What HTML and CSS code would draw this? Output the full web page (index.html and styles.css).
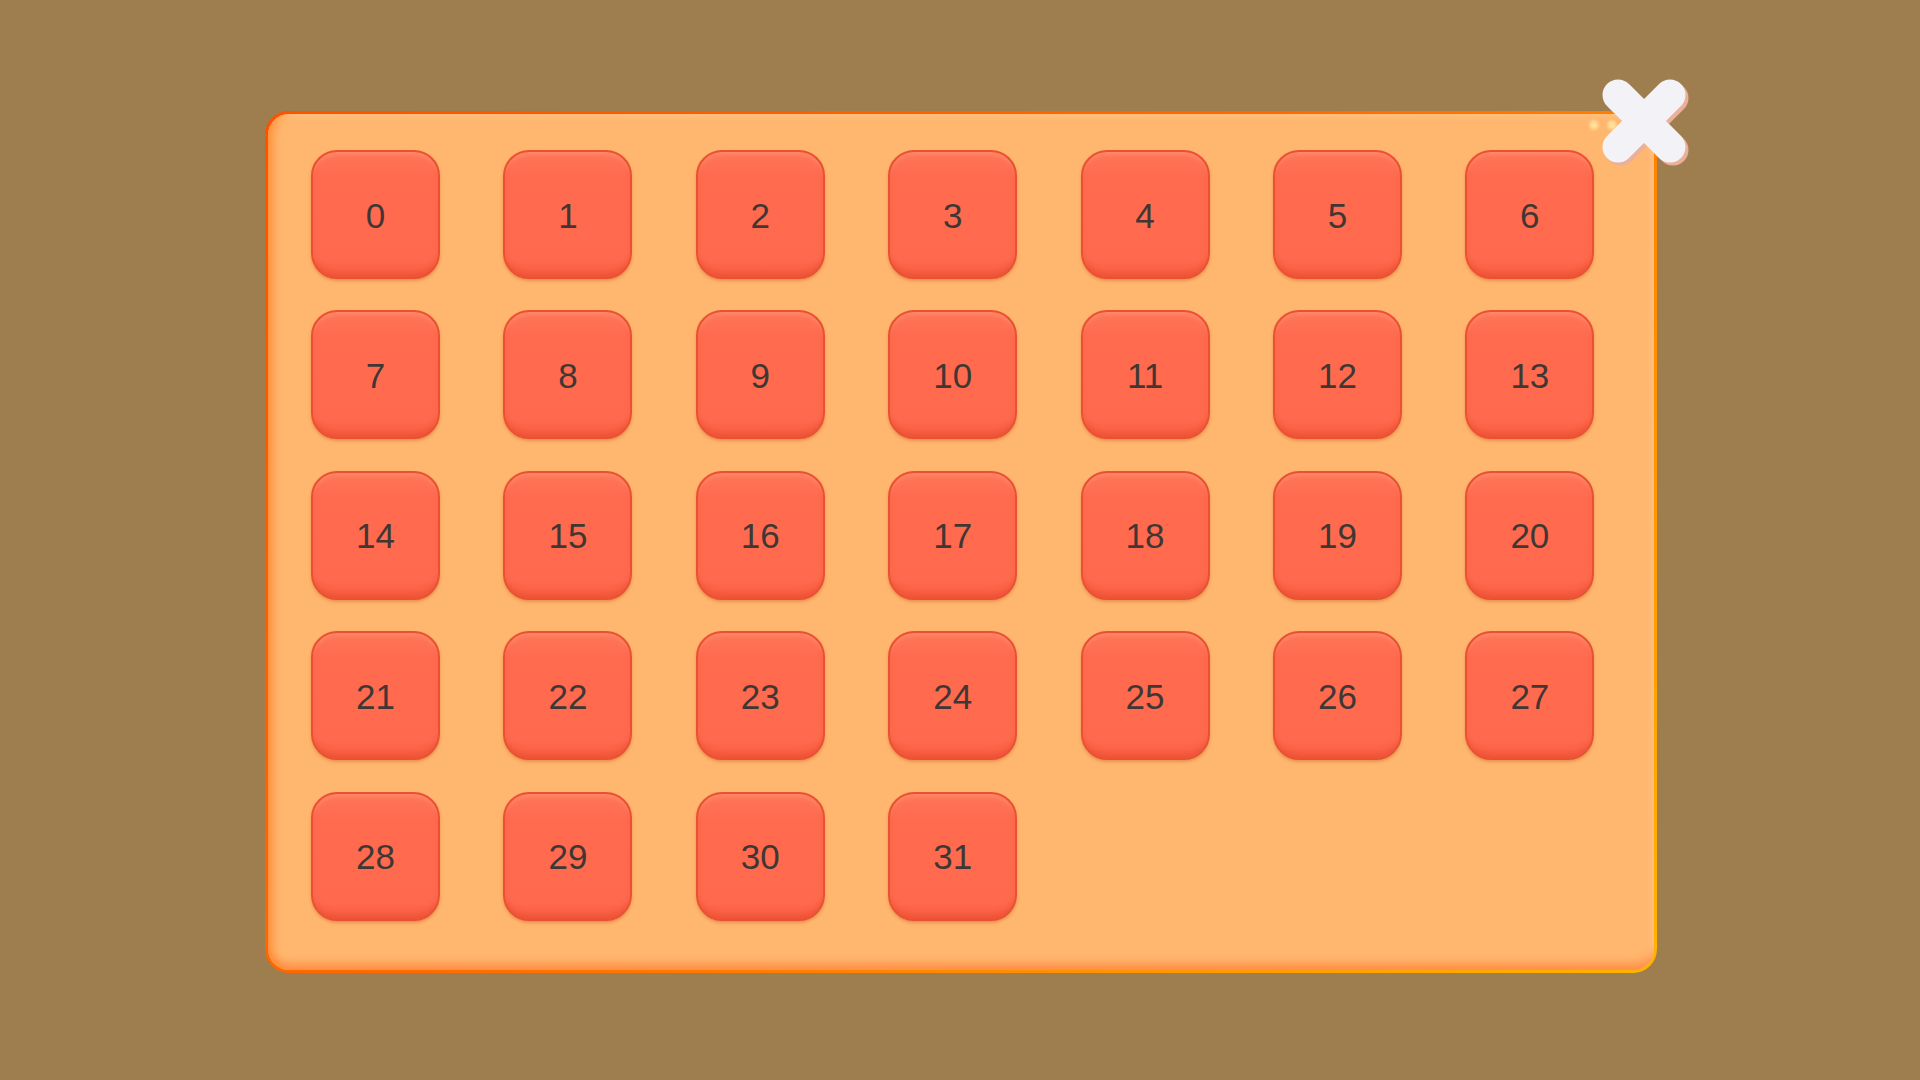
FILE: index.html
```html
<!DOCTYPE html>
<html>
<head>
<meta charset="utf-8">
<title>Levels</title>
<link rel="stylesheet" href="styles.css">
</head>
<body>
<div class="stage">
  <div class="panel">
    <div class="grid">
      <div class="cell">0</div><div class="cell">1</div><div class="cell">2</div><div class="cell">3</div><div class="cell">4</div><div class="cell">5</div><div class="cell">6</div>
      <div class="cell">7</div><div class="cell">8</div><div class="cell">9</div><div class="cell">10</div><div class="cell">11</div><div class="cell">12</div><div class="cell">13</div>
      <div class="cell">14</div><div class="cell">15</div><div class="cell">16</div><div class="cell">17</div><div class="cell">18</div><div class="cell">19</div><div class="cell">20</div>
      <div class="cell">21</div><div class="cell">22</div><div class="cell">23</div><div class="cell">24</div><div class="cell">25</div><div class="cell">26</div><div class="cell">27</div>
      <div class="cell">28</div><div class="cell">29</div><div class="cell">30</div><div class="cell">31</div>
    </div>
    <svg class="close" width="120" height="100" viewBox="0 0 120 100">
      <defs>
        <filter id="soft" x="-50%" y="-50%" width="200%" height="200%">
          <feGaussianBlur stdDeviation="1.5"/>
        </filter>
      </defs>
      <circle cx="20" cy="54" r="4.5" fill="#fff0a8" opacity="0.75" filter="url(#soft)"/>
      <circle cx="38" cy="54" r="4.5" fill="#fff0a8" opacity="0.75" filter="url(#soft)"/>
      <g stroke="#eab09a" stroke-width="31" stroke-linecap="round">
        <line x1="47" y1="27" x2="99" y2="79"/>
        <line x1="99" y1="27" x2="47" y2="79"/>
      </g>
      <g stroke="#f3f3f7" stroke-width="31" stroke-linecap="round">
        <line x1="44" y1="24" x2="96" y2="76"/>
        <line x1="96" y1="24" x2="44" y2="76"/>
      </g>
      <circle cx="70" cy="50" r="20" fill="#f3f3f7"/>
    </svg>
  </div>
</div>
</body>
</html>
```
FILE: styles.css
```css
html, body {
  margin: 0;
  padding: 0;
  background: #9e7d4e;
  width: 1920px;
  height: 1080px;
  overflow: hidden;
}
.stage {
  padding: 111px 0 0 265px;
}
.panel {
  position: relative;
  box-sizing: border-box;
  width: 1392px;
  height: 862px;
  border: 3px solid transparent;
  border-radius: 24px;
  background:
    linear-gradient(#ffb66e, #ffb66e) padding-box,
    linear-gradient(135deg, #ff5200 0%, #ff6a00 45%, #ffb400 100%) border-box;
  box-shadow:
    inset 10px 0 10px -6px #ff8a35,
    inset 0 -12px 10px -6px #ff8d45,
    inset 0 6px 6px -4px #ffc98e,
    inset -6px 0 6px -4px #ffc98e;
  padding: 36px 0 0 43px;
}
.grid {
  display: grid;
  grid-template-columns: repeat(7, 129px);
  grid-auto-rows: 129px;
  column-gap: 63.4px;
  row-gap: 31.4px;
}
.cell {
  box-sizing: border-box;
  border: 2px solid #ea5132;
  border-radius: 26px;
  background: linear-gradient(#ff7556 0%, #ff6b4f 20%, #ff6a4e 85%, #f95e42 100%);
  box-shadow:
    inset 0 5px 4px -2px rgba(255, 160, 130, 0.45),
    inset 0 -6px 6px -2px rgba(215, 60, 30, 0.35),
    0 2px 3px rgba(190, 80, 30, 0.35);
  display: flex;
  align-items: center;
  justify-content: center;
  padding-top: 2px;
  font-family: "Liberation Sans", Arial, sans-serif;
  font-size: 35px;
  color: #403734;
}
.close {
  position: absolute;
  left: 1305.5px;
  top: -43.5px;
}
```
